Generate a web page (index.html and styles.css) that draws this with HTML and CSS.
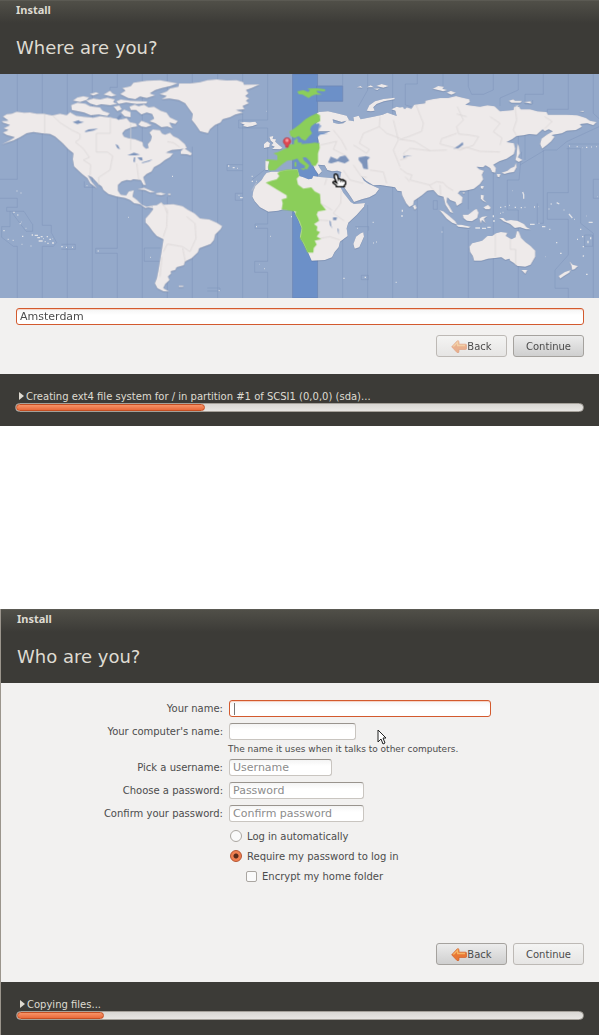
FILE: index.html
```
<!DOCTYPE html>
<html lang="en">
<head>
    <meta charset="UTF-8">
    <meta name="viewport" content="width=device-width, initial-scale=1.0">
    <title>Install</title>
    <link rel="stylesheet" href="styles.css">
</head>
<body>
    <section class="window">
        <header class="header">
            <div class="titlebar">Install</div>
            <h1>Where are you?</h1>
        </header>

        <svg class="map" viewBox="0 12 1797 672" role="img" aria-label="Time zone map">
            <rect class="sea" y="12" width="1797" height="672"/>
            <rect class="zone" x="878" y="12" width="75" height="672"/>
            <path class="zone" d="M950 48h78v46h-78z"/>

            <!-- time zone lines -->
            <path class="line" d="M52 12V328H0M0 385H52V412H20V424H72L98 464V484H78L36 428M30 424V470H5V502L40 529H52V684M127 12V466H154V488L170 518 160 529H127V684M202 12V684M184 523H226V538H184M277 12V684M352 12V52H330V80M352 370V535H287V550H352V684M427 12V684M502 12V60M502 380V684M577 12V40M577 230V684M482 534H433V574H480M253 334V352H285M653 12V684M728 12V684M803 12V150H716V174H803V292L755 330M803 330V462H765V475H803V574H764V607H803V684M728 284H681V302H728M728 370H706V391H728M622 654H660V663H622M878 12V684M953 12V48H1028V94H953V130M953 550V684M1028 12V48M1028 510V684M1103 12V60L1075 110M1103 405V684M1084 616H1105V629H1084zM1178 12V684M1066 470H1106V482"/>
            <path class="line" d="M1252 12V42H1216V105L1235 110M1252 380V684M1329 12V60M1329 470V684M1405 12V50L1415 73H1450L1480 60V12M1405 360V418M1405 480V684M1480 250V684M1555 12V60L1500 84V108M1555 190V225M1565 245L1557 330H1522V420H1555V684M1630 12V73H1575V102H1598V90M1575 195V270M1630 240V460H1612V400M1642 368V448H1705V555L1665 600V655H1705V684M1642 368H1705V228M1705 12V118H1642V128M1780 12V130L1797 146M1797 170L1700 215 1670 240H1635L1560 285M1705 222H1797M1700 236H1742V460L1780 490V684M1797 328H1780V385H1797M1754 495H1778V529H1754zM1300 392H1312V418H1300z"/>

            <g class="land">
                <!-- North America -->
                <path d="M8 140L20 132 35 131 50 125 72 128 90 127 110 131 130 131 157 136 180 131 200 135 210 126 228 137 250 140 280 143 300 138 330 142 362 148 380 144 390 156 408 160 412 170 395 172 375 180 367 190 372 200 385 204 405 207 428 216 430 228 438 236 445 234 443 222 452 212 455 200 448 188 458 178 480 180 486 190 495 194 510 188 520 198 535 205 555 222 561 235 540 238 515 240 498 248 520 250 510 262 495 270 480 282 462 292 455 305 440 312 430 322 438 345 430 345 422 330 400 328 392 332 380 330 365 335 354 345 354 362 362 374 378 376 386 364 402 360 398 380 412 390 425 404 440 410 456 407 458 415 445 412 436 414 420 403 402 400 390 390 375 384 350 380 325 372 310 360 305 350 295 342 276 322 264 316 275 335 292 356 270 340 262 325 246 312 222 290 218 268 220 250 205 238 188 220 165 200 150 192 125 190 100 186 80 190 60 202 40 212 5 223 30 210 50 198 45 202 20 195 8 188 25 180 10 175 30 165 8 158 5 153 25 152z"/>
                <path d="M542 243L552 234 562 240 576 250 572 257 560 253 542 252z"/>
                <!-- Arctic islands -->
                <path d="M213 105L232 98 256 101 270 108 300 112 308 122 330 130 322 138 296 134 272 136 252 128 234 124 215 120z"/>
                <path d="M218 92L232 82 250 78 268 82 260 90 240 96z"/>
                <path d="M258 92L280 85 300 88 322 83 345 88 340 96 352 102 330 106 304 103 290 107 270 101z"/>
                <path d="M268 72L288 66 298 71 280 77zM310 74L330 62 338 70 350 76 334 80zM348 94L362 88 390 92 442 94 440 101 410 102 378 98 356 102zM340 110L358 106 366 118 352 124zM362 128L372 118 392 126 392 142 374 140z"/>
                <path d="M384 84L360 72 376 62 366 54 392 48 400 38 440 32 480 30 534 40 512 48 486 54 466 60 450 70 466 76 440 84 420 80 406 88z"/>
                <path d="M388 110L404 104 416 108 432 104 446 112 462 110 482 122 500 128 510 142 534 153 526 162 508 158 518 176 502 170 484 172 466 160 448 154 462 146 456 132 440 128 424 134 408 120 392 120z"/>
                <path d="M414 164L424 152 440 158 456 166 438 172 424 170z"/>
                <!-- Caribbean -->
                <path d="M412 358L432 353 450 360 466 367 450 368 434 360zM468 369L482 367 498 372 484 376 468 374zM504 371H512V375H504z"/>
                <!-- South America -->
                <path d="M456 406L470 405 484 396 490 404 520 402 548 408 562 418 584 430 600 445 628 448 650 458 667 468 662 478 646 494 642 510 632 522 612 530 598 535 594 547 575 565 555 575 552 586 530 592 526 600 512 604 514 611 504 620 509 630 496 642 490 654 508 665 490 664 472 655 464 640 470 625 475 600 480 570 485 540 490 508 470 498 458 485 446 468 436 458 436 446 448 432 459 418z"/>
                <path d="M536 647H550V651H536z"/>
                <!-- Greenland -->
                <path d="M478 72L500 64 510 55 535 50 537 40 570 40 600 36 622 30 650 28 680 31 710 30 730 36 732 44 780 43 755 54 738 60 746 70 736 78 748 86 738 92 747 100 728 108 734 118 708 120 730 128 706 134 690 142 668 148 662 158 645 165 630 178 624 190 600 184 585 162 575 150 578 132 566 116 555 100 536 90 508 86 484 88 500 78z"/>

                <g transform="translate(600 0)">
                    <!-- Iceland, Great Britain, Ireland -->
                    <path d="M120 158L132 156 150 157 166 155 172 163 158 168 142 171 128 168 134 164z"/>
                    <path d="M208 200L220 198 218 207 228 208 226 215 236 224 248 234 240 238 216 237 224 230 214 226 220 219 212 212zM192 222L202 214 210 220 208 231 192 234z"/>
                    <!-- Europe and western Asia -->
                    <path d="M350 130L358 126 384 124 410 130 440 137 447 150 425 156 398 148 400 158 416 162 430 160 442 150 462 154 460 142 476 137 482 148 520 140 548 134 562 128 590 138 586 122 574 118 590 110 606 114V364L592 362 585 352 560 348 540 345 520 346 498 332 484 318 492 332 506 342 514 345 520 348 538 356 526 372 508 382 486 388 462 396 456 386 444 368 432 352 424 338 420 326 424 306 412 302 396 304 382 300 374 286 354 284 358 292 366 304 356 314 346 300 340 288 345 240 358 220 350 190 368 192 392 184 352 184 348 160 360 150z"/>
                    <path d="M196 272L208 272 204 300 196 300z"/>
                    <path d="M500 122L508 106 525 94 550 87 584 83 584 88 552 94 530 102 520 112 524 122 512 124z"/>
                    <path d="M470 52L482 48 488 53zM500 52L512 46 522 52zM528 48L545 42 566 48 550 53zM520 56L540 55 532 60z"/>
                    <!-- Africa -->
                    <path d="M200 308L215 305 235 305 262 300 292 298 298 318 310 322 325 328 336 326 340 318 360 321 400 325 412 330 418 345 430 368 438 378 452 396 462 402 495 399 492 410 470 435 445 458 440 475 443 498 420 515 416 532 404 546 396 562 375 570 335 572 325 550 310 520 300 500 305 475 295 450 285 430 280 420 250 418 235 422 205 425 180 412 164 394 157 380 160 362 166 348 185 330 192 318z"/>
                    <path d="M468 500L482 490 490 487 492 500 478 532 464 536 460 522z"/>
                </g>

                <g transform="translate(1200 0)">
                    <!-- Asia -->
                    <path d="M-2 114L8 110 14 118 20 112 34 116 42 104 75 100 76 92 96 88 120 84 144 84 168 78 182 82 208 88 210 96 196 104 240 110 262 106 284 109 300 124 340 120 342 110 358 110 362 118 390 118 412 124 440 126 444 134 500 134 532 136 558 144 570 152 590 156 580 166 562 160 540 162 546 170 528 180 500 182 486 190 455 195 464 200 454 214 440 226 426 236 420 222 424 206 440 194 458 184 446 178 434 184 428 178 410 194 388 192 370 196 350 198 336 208 320 216 342 220 346 236 342 252 320 266 298 274 280 284 288 294 286 308 276 306 270 294 256 286 250 292 230 290 238 298 252 302 246 314 250 328 240 342 222 356 196 362 180 362 174 370 188 382 186 398 170 408 166 396 150 390 142 382 140 396 150 412 160 430 150 426 136 404 130 380 114 376 100 360 82 362 66 376 42 392 40 404 28 411 18 400 6 376 4 362-4 362z"/>
                    <path d="M98 56L114 48 132 50 128 56 142 60 130 64zM140 68L152 62 168 68 154 74zM326 92L340 88 345 92 366 92 362 98 334 98zM370 96L392 94 394 101zM344 108L356 105 352 112zM538 123L552 122 550 126z"/>
                    <path d="M38 408L46 404 50 414 44 420zM186 368L194 366 192 372zM242 348L252 348 248 358 242 354z"/>
                    <!-- Japan -->
                    <path d="M352 220L357 230 360 250 354 262 368 270 356 276 346 270 349 256zM348 278L350 292 342 306 326 308 314 312 304 308 322 302 332 294 342 290zM290 312L302 312 298 322 292 320z"/>
                    <!-- South-East Asia -->
                    <path d="M118 420L130 424 148 438 166 454 172 464 156 458 140 446zM168 464L184 464 212 470 206 474 174 470zM188 434L204 434 222 420 230 416 236 428 232 444 216 454 200 452 190 444zM242 374L252 376 250 388 260 398 248 392 242 386zM250 412L264 404 272 412 270 418 256 418zM238 446L246 440 262 438 252 446 256 460 246 450 242 462z"/>
                    <path d="M298 444L310 444 318 452 332 450 352 452 372 462 380 472 392 478 378 478 360 472 344 474 330 462 310 454z"/>
                    <!-- Australia, New Zealand -->
                    <path d="M208 530L216 520 246 512 262 498 276 498 288 490 302 486 322 488 318 498 334 508 346 502 350 484 356 484 364 504 376 516 392 528 406 542 406 560 392 584 376 590 352 588 340 578 330 572 328 566 316 570 304 562 286 564 264 566 244 572 222 572 218 558 210 546zM364 600L382 600 376 612z"/>
                    <path d="M508 574L518 584 534 588 524 598 516 600 514 588zM512 600L508 608 492 618 480 626 476 618 494 606z"/>
                </g>
            </g>

            <!-- small islands -->
            <path class="islands" d="M40 427h4M52 435h3M65 456h1M59 461h3M77 475h2M10 482h4M23 508h3M38 511h3M66 499h4M65 523h2M92 528h2M62 369h2M50 363h2M95 495h4M104 496h10M112 503h8M122 500h6M116 513h12M130 506h2M140 500h4M134 515h3M142 520h4M148 508h5M156 519h6M158 506h1M184 530h4M198 532h3M216 532h3M293 543h3M384 442h2M450 562h2M516 319h3M260 347h2"/>
            <path class="islands" d="M684 288h4M698 293h6M712 295h2M755 319h3M755 334h4M768 334h2M716 376h2M720 383h8M798 124h1M768 470h3M810 499h2M873 440h3M779 583h1M792 596h2M656 662h3M1118 457h3M1072 475h2M1119 519h2M1128 516h2M1030 625h4M1094 622h4M1187 637h3"/>
            <path class="islands" d="M1207 419v6M1206 435v6M1538 362h1M1568 366l3 8 0 12M1508 427h2M1500 412h4M1514 410h3M1528 406h2M1544 412h4M1562 413h4M1574 412h2M1602 411h3M1615 410h1M1646 417h2M1652 402h3M1670 398l8 4M1691 420h2M1707 432l10 12M1722 448h2M1590 463h14M1616 460h2M1626 470h10M1648 478h3M1668 518h4M1680 550h5M1636 560h1M1758 613h5M1480 436v6M1482 450v6M1500 430h2M1426 474h14M1446 475h12M1462 472h10M1325 486h2M1740 478h4M1748 498v4M1731 508h3M1748 530h4M1751 556l-2 4M1764 512v8M1772 502v6M1766 457h12M1760 438h1M1792 380h1M1708 228h2M1730 230h3M1747 233h1M1758 232h4M1773 231h2M1789 230h2"/>

            <!-- highlighted zone -->
            <g class="picked" transform="translate(600 0)">
                <path d="M292 64L310 60 325 66 330 60 322 56 350 55 376 58 374 64 350 62 352 68 366 74 345 74 334 78 326 84 318 80 308 74 296 72z"/>
                <path d="M268 184L282 176 298 164 316 148 332 138 350 130 360 136 360 154 346 160 334 168 330 178 336 190 326 200 316 212 306 208 296 198 284 204 272 198z"/>
                <path d="M282 212L292 204 294 218 306 218 304 222 330 220 345 218 358 220 359 234 354 250 354 276 346 288 336 286 330 274 318 262 308 262 312 272 328 286 322 298 312 296 316 288 300 278 292 266 278 270 262 272 250 280 238 290 226 300 208 302 204 292 208 274 196 272 202 268 232 270 232 256 220 250 234 246 246 240 260 234 268 224 282 222zM284 276H289V290H284zM300 296L314 294 312 300z"/>
                <path d="M240 303L262 299 293 298 298 318 290 326 294 344 310 356 334 352 344 364 360 372 362 400 378 420 354 424 350 434 358 452 342 462 352 470 350 482 360 486 350 500 364 507 344 512 350 524 341 534 340 548 322 548 310 520 300 505 305 475 298 455 285 432 288 425 245 418 248 400 245 388 260 384 260 376 230 358 197 338 215 332 230 328 238 318 232 310z"/>
            </g>

            <!-- lakes and inland seas -->
            <path class="water" d="M218 156l18-6 4 4 12 2-20 6zM254 184l12-6 28-2-14 6-24 4zM346 222l8 4 6 12-8-4zM382 256l20-8 18 6-14 2zM402 262l4 0-2 16-4-4zM412 262l14 0 2 10-8-2zM424 278l34-10-10 6-20 5zM350 144l10-10 6 4-10 12z"/>
            <path class="water" d="M984 278l8-18 20 8 8-8 16-4 12 16-14 8-20-6-20 6zM1076 262l22-4 12 4-8 8 2 28-14-2-4-14-10-12zM999 442l12 0-2 8-10 0zM988 452l4 2 2 14 4 8-8-10zM1012 474l4 4 0 16-2-8zM1360 236l16-10 12-10 2 8-14 10-12 2zM1209 258l28-2-18 4-8 4z"/>
            <path class="baltic" d="M942 162l14-2 8 8-8 10-2 10 30 2-24 4-10 10-14 12-26 2 14-8 10-8 6-12-8-12z"/>

            <!-- country and zone borders on land -->
            <path class="border" d="M134 132V190M157 136L180 158 215 180 240 192V206L226 216 250 236 268 262 250 270 272 284 270 318M331 140V190H289V246H322L338 258 330 300 296 322V345M392 160V240M410 280L416 328M502 215L520 218 540 232M485 400L502 420 500 470 490 500M502 430L495 415M490 545L502 522 548 530 570 545 588 505 585 460 560 440M486 560L480 620M548 534L556 575"/>
            <path class="border" d="M960 160L956 184M962 225L1010 214 1000 238 1040 258M1000 180L1024 210 1040 240M1140 140L1138 170 1160 190 1200 205M1138 170L1090 190 1078 220 1108 238 1100 250 1060 225M1180 150L1195 210 1180 240 1200 290M1110 300L1150 306 1160 340M1060 285L1084 320 1100 322M1030 300L1050 330 1090 340M974 345L980 325M1024 360L1022 400 1000 430 1032 452M962 400L996 420M955 450L986 452M960 505L990 500 1020 510M770 338L756 362"/>
            <path class="border" d="M1248 104L1270 160 1265 184 1225 200 1200 208 1244 214 1290 242 1230 235 1210 250 1220 264 1200 270M1372 110L1390 150 1370 170 1376 192 1408 195 1436 200 1420 226 1380 240 1360 232 1320 222 1325 206 1370 190M1370 132L1400 140M1290 242L1340 240M1470 140L1500 160 1480 185 1506 204 1500 225M1545 110L1550 150 1540 180 1550 198M1634 140L1656 154 1634 176M1380 235L1400 232 1440 244 1500 246M1200 295L1220 310 1236 315 1230 330 1290 345 1310 335 1330 338 1340 350 1360 362M1288 345L1300 360M1320 345L1322 375M1216 320L1228 335M1486 492V560M1531 505V538H1547V585"/>

            <!-- location pin -->
            <path class="pin" d="M858 232l-2-8a11 11 0 1 1 10 0l-2 8z"/>
            <circle class="pin-dot" cx="861" cy="211" r="5"/>

            <path class="hand" d="M1003 314c4-4 9-1 10 3l2 10 6 0 3 3 5-1 3 3 3 0 2 4 0 6-4 4 0 4h-24l0-4-10-7c-2-4 3-6 6-4l5 3-7-16z"/>
            <path class="hand-lines" d="M1015 326v8M1022 331v6M1029 332v5"/>
        </svg>

        <form class="content">
            <input class="field focused city" type="text" value="Amsterdam" aria-label="City">
            <div class="buttons">
                <button class="btn faded" type="button">
                    <svg class="arrow" viewBox="0 0 48 38"><path d="M2 20L19 2q5-2 5 4v6h19q4 0 4 4v8q0 4-4 4H24v6q0 6-6 3z"/><path class="shine" d="M7 19L20 6v10h22"/></svg>Back
                </button>
                <button class="btn selected" type="button">Continue</button>
            </div>
        </form>

        <footer class="footer">
            <button class="details" type="button">
                <svg class="triangle" viewBox="0 0 5 8"><path d="M0 0L5 4 0 8z"/></svg>Creating ext4 file system for / in partition #1 of SCSI1 (0,0,0) (sda)...
            </button>
            <progress value="334" max="1000" aria-label="Install progress"></progress>
        </footer>
    </section>

    <section class="window second">
        <header class="header">
            <div class="titlebar">Install</div>
            <h1>Who are you?</h1>
        </header>

        <form class="content">
            <div class="form">
                <label for="name">Your name:</label>
                <input class="field focused caret w-name" id="name" type="text">

                <label for="computer">Your computer's name:</label>
                <input class="field w-computer" id="computer" type="text">
                <small class="hint">The name it uses when it talks to other computers.</small>

                <label for="username">Pick a username:</label>
                <input class="field w-user" id="username" type="text" placeholder="Username">

                <label for="password">Choose a password:</label>
                <input class="field w-pass" id="password" type="password" placeholder="Password">

                <label for="confirm">Confirm your password:</label>
                <input class="field w-pass" id="confirm" type="password" placeholder="Confirm password">

                <div class="options">
                    <label><input type="radio" name="login">Log in automatically</label>
                    <label><input type="radio" name="login" checked>Require my password to log in</label>
                    <label class="indent"><input type="checkbox">Encrypt my home folder</label>
                </div>
            </div>

            <div class="buttons">
                <button class="btn selected" type="button">
                    <svg class="arrow" viewBox="0 0 48 38"><path d="M2 20L19 2q5-2 5 4v6h19q4 0 4 4v8q0 4-4 4H24v6q0 6-6 3z"/><path class="shine" d="M7 19L20 6v10h22"/></svg>Back
                </button>
                <button class="btn" type="button">Continue</button>
            </div>
            <svg class="pointer" viewBox="0 0 10 16"><path d="M1 1V13L4 10 6 15 8 14 6 9H9z"/></svg>
        </form>

        <footer class="footer">
            <button class="details" type="button">
                <svg class="triangle" viewBox="0 0 5 8"><path d="M0 0L5 4 0 8z"/></svg>Copying files...
            </button>
            <progress value="154" max="1000" aria-label="Install progress"></progress>
        </footer>
    </section>
</body>
</html>
```
FILE: styles.css
```
* {
    box-sizing: border-box;
}

body {
    margin: 0;
    background: white;
    color: #4c4c4c;
    font-family: "DejaVu Sans", sans-serif;
    font-size: 10px;
}

input, button {
    font: inherit;
    color: inherit;
}

.window {
    background: #f2f1f0;
}

.second {
    margin-top: 183px;
    border-left: 1px solid #9b958c;
}

.header {
    height: 74px;
    padding: 2px 16px 0;
    background: linear-gradient(#504f48, #3c3b37 22px);
    color: #dfdbd2;
    border-top: 1px solid #5b5a53;
}

.titlebar {
    font-family: "Noto Sans", sans-serif;
    font-weight: bold;
    font-size: 11px;
    line-height: 14px;
}

h1 {
    margin: 19px 0 0;
    font-size: 18px;
    font-weight: normal;
    line-height: 24px;
}

/* map */
.map {
    display: block;
    width: 100%;
    height: auto;
}

.sea {
    fill: #94a9ca;
}

.zone {
    fill: #6c90c8;
    stroke: #6482b8;
    stroke-width: 2;
}

.line {
    fill: none;
    stroke: #7e92ba;
    stroke-width: 2;
    opacity: 0.7;
}

.land {
    fill: #eeeaea;
    filter: drop-shadow(0 1px 1px rgba(60, 80, 120, 0.6));
}

.islands {
    fill: none;
    stroke: #dfe1e6;
    stroke-width: 4;
}

.picked {
    fill: #8bce5a;
}

.water {
    fill: #7d94bb;
}

.baltic {
    fill: #6c90c8;
}

.border {
    fill: none;
    stroke: #d8d3d3;
    stroke-width: 2;
}

.pin {
    fill: #df4850;
    stroke: #b52f3c;
    stroke-width: 2;
}

.pin-dot {
    fill: #f59aa0;
}

.hand {
    fill: white;
    stroke: black;
    stroke-width: 4;
}

.hand-lines {
    stroke: black;
    stroke-width: 2;
}

/* content */
.content {
    position: relative;
    padding: 10px 15px 17px 16px;
}

.field {
    height: 17px;
    padding: 0 3px;
    border: 1px solid #c9c5c0;
    border-top-color: #99948e;
    border-radius: 3px;
    background: linear-gradient(#f4f4f4, white 6px);
    font-size: 11px;
    outline: none;
}

.field::placeholder {
    color: #8c8c8c;
    opacity: 1;
}

.focused {
    border-color: #d35a2e;
    box-shadow: inset 0 1px #f6d3c5;
}

.city {
    display: block;
    width: 100%;
}

.caret {
    background: linear-gradient(#777, #777) 4px 2px / 1px 12px no-repeat, linear-gradient(#f4f4f4, white 6px);
}

.buttons {
    display: flex;
    justify-content: flex-end;
    gap: 6px;
    margin-top: 10px;
}

.btn {
    display: flex;
    align-items: center;
    justify-content: center;
    width: 71px;
    height: 22px;
    padding: 0;
    border: 1px solid #bdb9b5;
    border-radius: 3px;
    background: linear-gradient(#f4f4f3, #e6e5e4);
}

.selected {
    border-color: #a5a29e;
    background: linear-gradient(#ececec, #cfcfcf);
}

.arrow {
    width: 16px;
    height: 13px;
    fill: #e87735;
    stroke: #cf5b24;
    stroke-width: 2;
}

.arrow .shine {
    fill: none;
    stroke: #f5b465;
    stroke-width: 4;
}

.faded .arrow {
    opacity: 0.5;
}

.form {
    display: grid;
    grid-template-columns: 206px 1fr;
    gap: 6px;
    align-items: center;
    justify-items: start;
    padding-top: 7px;
}

.form > label {
    justify-self: end;
}

.w-name {
    width: 262px;
}

.w-computer {
    width: 127px;
}

.w-user {
    width: 103px;
}

.w-pass {
    width: 135px;
}

.hint {
    grid-column: 2;
    margin: -2px 0 -2px -1px;
    font-size: 9px;
    line-height: 11px;
}

.options {
    grid-column: 2;
    display: grid;
    margin-top: -2px;
    padding-left: 1px;
}

.options label {
    display: flex;
    align-items: center;
    gap: 5px;
    height: 20px;
}

.options .indent {
    padding-left: 16px;
}

.options input {
    appearance: none;
    width: 12px;
    height: 12px;
    margin: 0;
    border: 1px solid #aaa6a1;
    border-radius: 50%;
    background: #fafafa;
}

.options input[type="checkbox"] {
    width: 11px;
    height: 11px;
    border-radius: 2px;
}

.options input:checked {
    border-color: #b5532f;
    background: radial-gradient(circle, #592b1b 2px, #f07f50 3px);
}

.second .buttons {
    margin-top: 57px;
}

.pointer {
    position: absolute;
    left: 376px;
    top: 46px;
    width: 10px;
    height: 16px;
    fill: white;
    stroke: #222;
}

/* footer */
.footer {
    height: 52px;
    padding: 15px 15px 0;
    background: #3c3b37;
    color: #dfdbd2;
}

.second .footer {
    height: 53px;
}

.details {
    display: flex;
    align-items: center;
    gap: 2px;
    height: 14px;
    padding: 0 0 0 4px;
    border: 0;
    background: none;
}

.triangle {
    width: 5px;
    height: 8px;
    fill: #dfdbd2;
}

progress {
    display: block;
    appearance: none;
    width: 100%;
    height: 9px;
    border: 1px solid #a5a19a;
    border-radius: 5px;
    overflow: hidden;
}

progress::-webkit-progress-bar {
    background: linear-gradient(#d9d7d3, #e8e6e3);
}

progress::-webkit-progress-value {
    border: 1px solid #c34e22;
    border-radius: 5px;
    background: linear-gradient(#f79468, #e9693a);
}
```
